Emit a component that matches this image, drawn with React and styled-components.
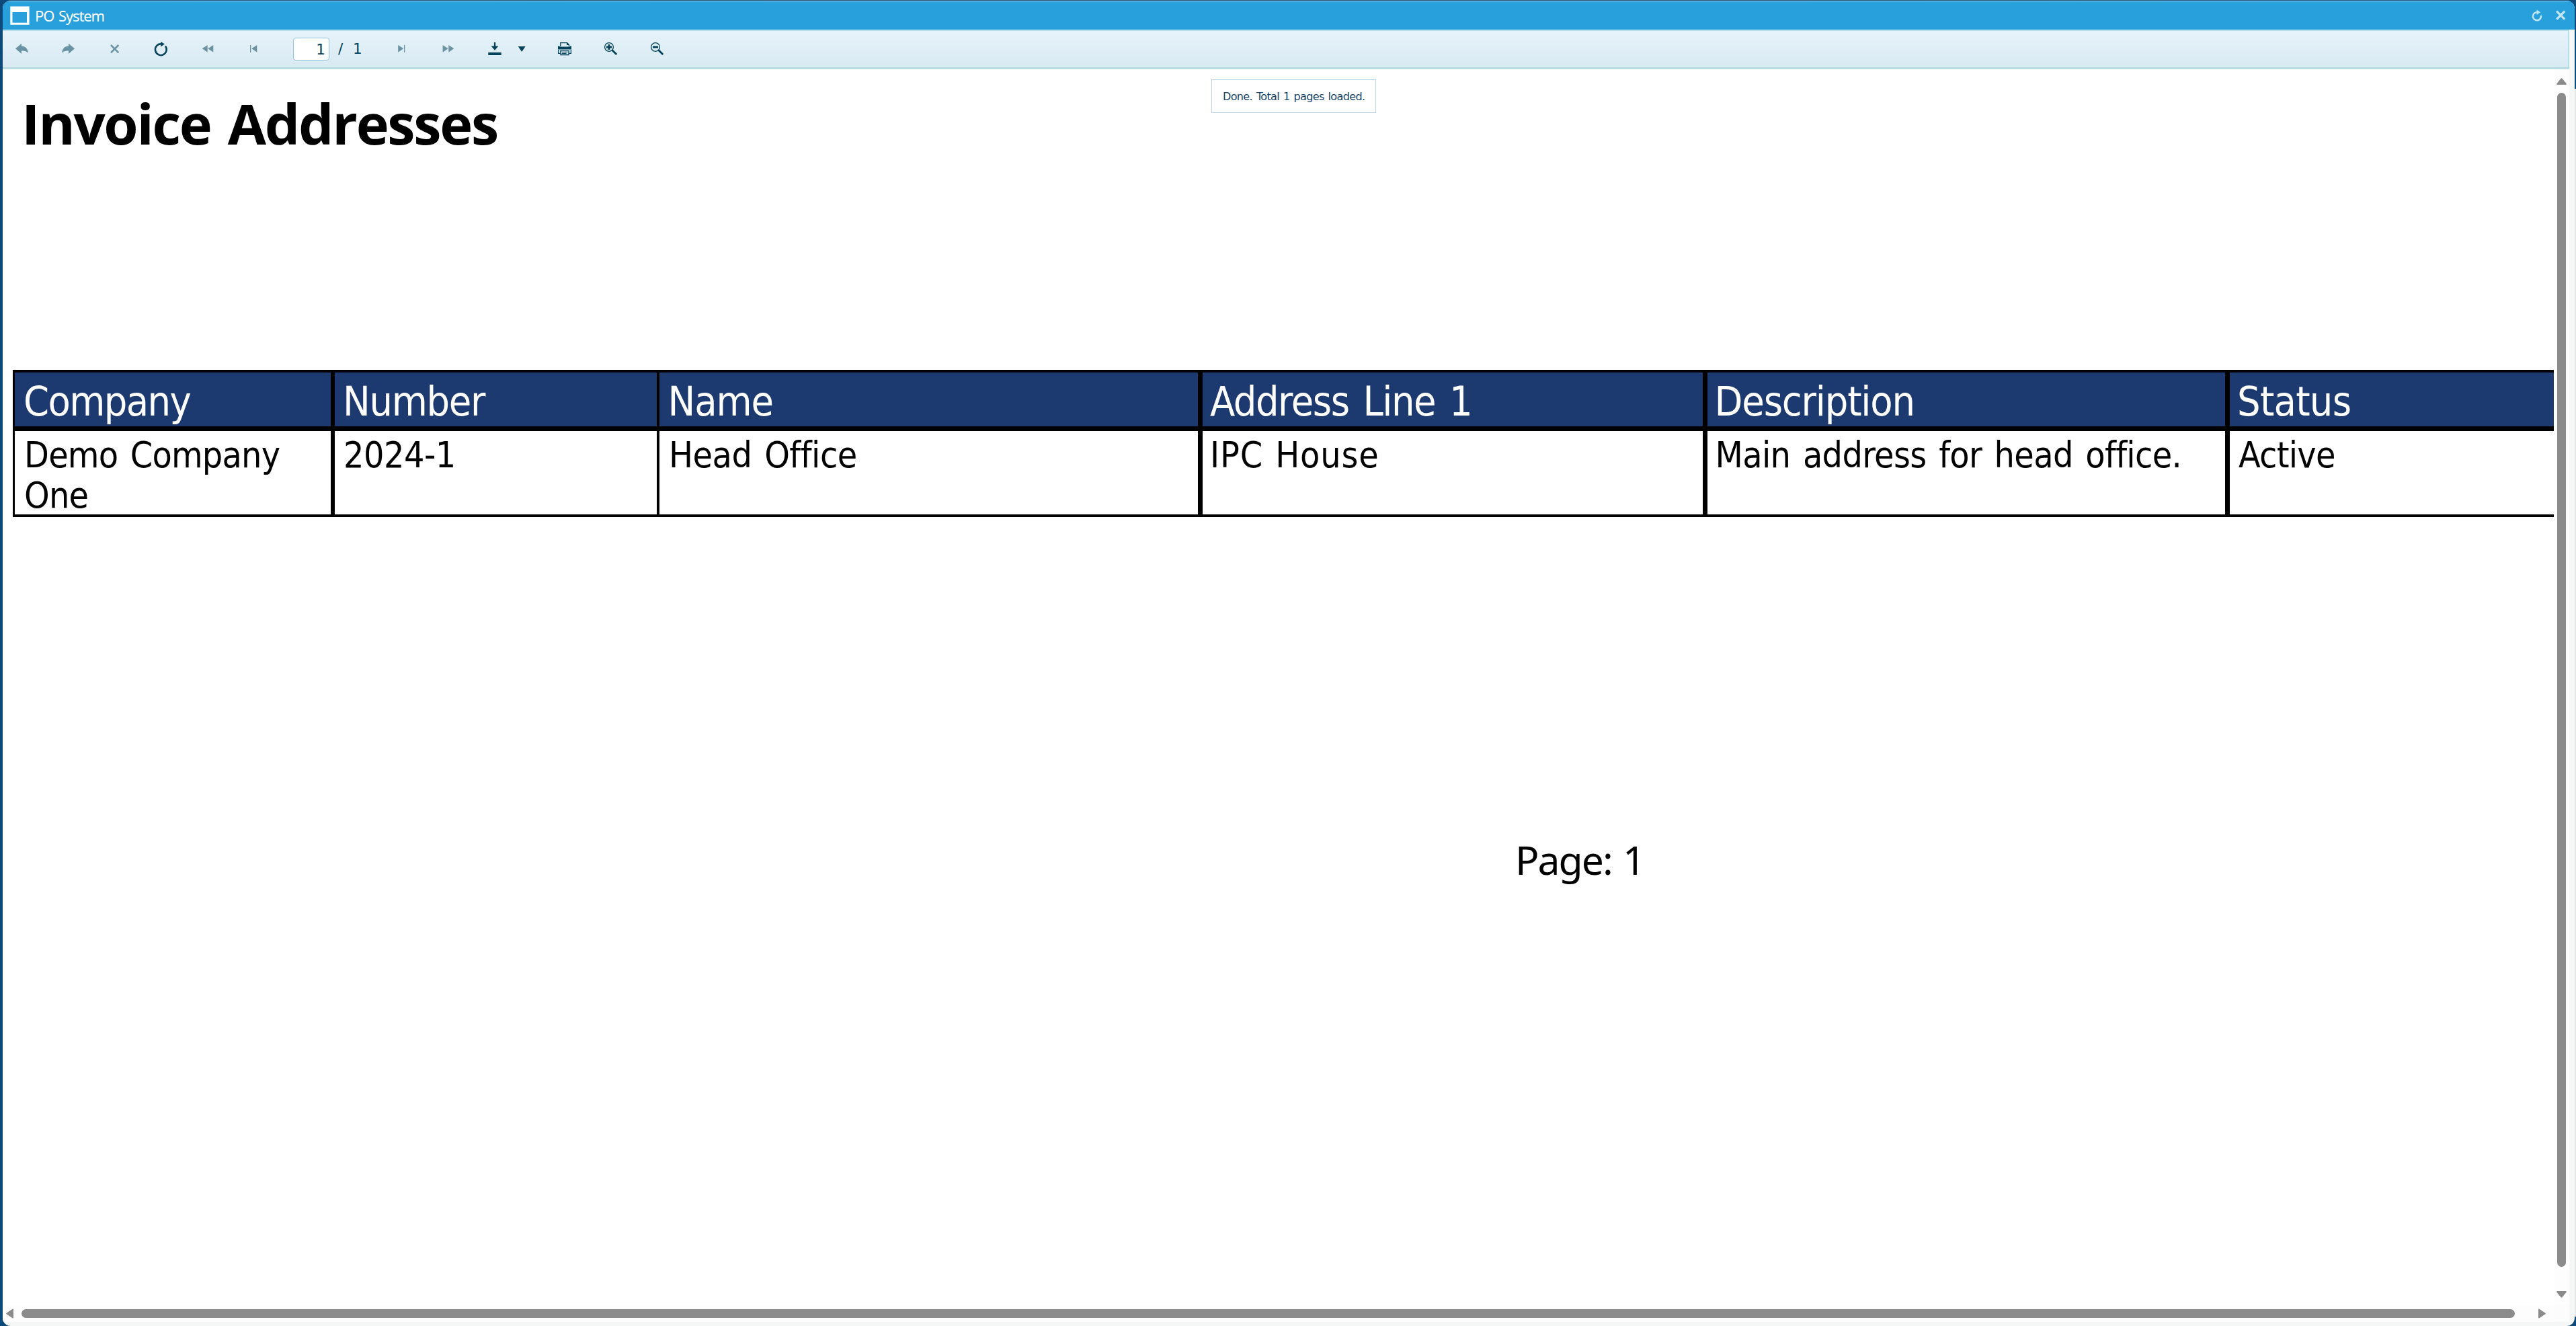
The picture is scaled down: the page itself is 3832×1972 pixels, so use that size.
import React from "react";
import styled, { createGlobalStyle } from "styled-components";

const GlobalStyle = createGlobalStyle`
  * { box-sizing: border-box; }
  html, body { margin: 0; padding: 0; overflow: hidden; }
  body { font-family: "Noto Sans", sans-serif; }
`;

const Desktop = styled.div`
  width: 3832px;
  height: 1972px;
  padding: 1px 2px 0 4px;
  background:
    linear-gradient(#e4e6e8, #e4e6e8) right 132px / 2px 1826px no-repeat,
    linear-gradient(90deg, #0b4a7a, #17456b 30%, #17456b 70%, #0b4a7a);
  background-position: right 0 top 132px, 0 0;
`;

const Window = styled.main`
  display: flex;
  flex-direction: column;
  height: 1971px;
  border-radius: 12px;
  overflow: hidden;
  background: #f5f6f6;
`;

const TitleBar = styled.header`
  display: flex;
  align-items: center;
  flex: none;
  height: 43px;
  padding: 0 13px 0 11px;
  border-top: 1px solid #b5dcf0;
  background: #27a0dc;
  color: #fff;
`;

const WindowTitle = styled.span`
  flex: 1;
  margin-left: 8px;
  font-size: 22px;
  line-height: 42px;
  letter-spacing: -1.1px;
  word-spacing: 2px;
`;

const TitleActions = styled.div`
  display: flex;
  gap: 20px;
  color: #c3e7fa;
`;

const Body = styled.div`
  display: flex;
  flex-direction: column;
  flex: 1;
  width: 3818px;
`;

const Toolbar = styled.nav`
  display: flex;
  align-items: stretch;
  gap: 11px;
  flex: none;
  height: 59px;
  border: solid #b4dee9;
  border-width: 2px 2px 3px 0;
  border-bottom-color: #b9dce1;
  background: linear-gradient(#e7f2fa, #d8eaf2);
  color: #02425a;
`;

const ToolButton = styled.button`
  width: ${(p) => p.$width || 58}px;
  height: 54px;
  padding: 0;
  border: 0;
  background: none;
  color: inherit;
  opacity: ${(p) => (p.$disabled ? 0.53 : 1)};
  svg { display: block; }
`;

const DownloadGroup = styled.div`
  display: flex;
  width: 94px;
`;

const Pager = styled.div`
  display: flex;
  align-items: center;
  width: 121px;
  margin: 0 0 0 18px;
  font: 21.5px "DejaVu Sans", sans-serif;
`;

const PageInput = styled.div`
  width: 54px;
  height: 34px;
  padding-right: 5px;
  border: 1px solid #8fc4de;
  border-radius: 4px;
  background: #fff;
  text-align: right;
  line-height: 34px;
`;

const PageCount = styled.span`
  margin-left: 13px;
  line-height: 34px;
  word-spacing: 8px;
  white-space: nowrap;
`;

const Viewport = styled.section`
  position: relative;
  display: grid;
  grid-template-columns: 3795px 23px;
  grid-template-rows: 1838px 25px;
  background: #fff;
`;

const Sheet = styled.article`
  overflow: hidden;
  color: #000;
`;

const ReportTitle = styled.h1`
  margin: 0;
  padding: 30px 0 0 28px;
  font: 700 83px/100px "Open Sans", "Noto Sans", sans-serif;
  letter-spacing: -2.3px;
  word-spacing: 6px;
`;

const ReportTable = styled.div`
  display: grid;
  grid-template-columns: 476px 483px 808px 751px 777px 500px;
  grid-template-rows: 87px 128px;
  width: 3795px;
  margin: 317px 0 0 15px;
  border: solid #000;
  border-width: 4px 0 0 3px;
  font-family: "DejaVu Sans Condensed", "DejaVu Sans", sans-serif;
`;

const Cell = styled.div`
  padding-left: ${(p) => p.$inset}px;
  border-right: ${(p) => p.$rule}px solid #000;
  letter-spacing: ${(p) => p.$tracking}px;
  word-spacing: ${(p) => p.$space || 4}px;
`;

const HeadCell = styled(Cell)`
  padding-top: 3px;
  border-bottom: 7px solid #000;
  background: #1d3a70;
  color: #fff;
  font-size: 60.6px;
  line-height: 80px;
`;

const DataCell = styled(Cell)`
  padding-top: 6px;
  border-bottom: 4px solid #000;
  font-size: 53.3px;
  line-height: 60px;
`;

const PageNumber = styled.footer`
  margin-top: 474px;
  padding-left: 2250px;
  font: 58.8px/70px "Noto Sans", sans-serif;
  letter-spacing: -2px;
  word-spacing: 3px;
`;

const StatusNotice = styled.div`
  position: absolute;
  top: 15px;
  left: 1798px;
  width: 245px;
  height: 50px;
  padding-left: 16px;
  border: 1px solid #bbd5e8;
  background: #fff;
  color: #154466;
  font: 16px/50px "DejaVu Sans", sans-serif;
  letter-spacing: -0.64px;
  word-spacing: 1.5px;
  white-space: nowrap;
`;

const ScrollBar = styled.div`
  display: flex;
  align-items: center;
  color: #8b8b8b;
  background: #fdfdfd;
  flex-direction: ${(p) => (p.$vertical ? "column" : "row")};
  padding: ${(p) => (p.$vertical ? "13px 0 11px" : "0 12px 0 5px")};
`;

const Thumb = styled.div`
  flex: 1;
  border-radius: 7px;
  background: #8b8b8b;
  ${(p) => (p.$vertical ? "width: 13px; margin: 12px 0 36px;" : "height: 13px; margin: 0 35px 0 12px;")}
`;

const Corner = styled.div`
  background: #fcfcfc;
`;

const columns = [
  { name: "Company", head: [13, -1.6], value: "Demo Company One", data: [14, -0.8], rule: 6 },
  { name: "Number", head: [12, -1.3], value: "2024-1", data: [13, -0.52], rule: 4 },
  { name: "Name", head: [12.5, -1.09], value: "Head Office", data: [14, -0.5], rule: 7 },
  { name: "Address Line 1", head: [11, -1.47, 5], value: "IPC House", data: [11, 0.85, 2], rule: 7 },
  { name: "Description", head: [10.5, -1.2], value: "Main address for head office.", data: [11.5, -0.66], rule: 7 },
  { name: "Status", head: [11, -0.72], value: "Active", data: [13, -0.74], rule: 0 },
];

const Icon = ({ width = 58, children }) => (
  <svg width={width} height="54" viewBox={`0 0 ${width} 54`} fill="currentColor">{children}</svg>
);

const curvedArrow = "M19 26.3 L28 18.7 V22.6 C33.5 22.8 37 26 38 32.7 C35 29.6 32 29.3 28 29.5 V34Z";

const UndoIcon = () => <Icon><path d={curvedArrow} /></Icon>;
const RedoIcon = () => <Icon><path transform="translate(57 0) scale(-1 1)" d={curvedArrow} /></Icon>;
const StopIcon = () => (
  <Icon><path d="M23 21 L34.3 32.3 M34.3 21 L23 32.3" fill="none" stroke="currentColor" strokeWidth="2.6" /></Icon>
);
const RefreshIcon = () => (
  <Icon>
    <path d="M28.6 19.3 A8.4 8.4 0 1 0 35 22.6" fill="none" stroke="currentColor" strokeWidth="2.5" />
    <path d="M28.2 16 L34 19.6 L28.2 23.4Z" />
  </Icon>
);
const FirstFastIcon = () => <Icon><path d="M28.7 21 V31.7 L20.7 26.3Z M37.3 21 V31.7 L29.3 26.3Z" /></Icon>;
const PreviousIcon = () => <Icon><path d="M33.3 21 V31.7 L25.3 26.3Z M23 21 H24.3 V32 H23Z" /></Icon>;
const NextIcon = () => <Icon><path d="M24.2 21 V31.7 L32.2 26.3Z M33 21 H34.3 V32 H33Z" /></Icon>;
const LastFastIcon = () => <Icon><path d="M21.6 21 V31.7 L29.6 26.3Z M30.3 21 V31.7 L38.3 26.3Z" /></Icon>;
const DownloadIcon = () => (
  <Icon><path d="M28.9 17 H31.2 V22.6 H35.4 L30 28.8 L24.6 22.6 H28.9Z M20.3 32 H39.7 V36 H20.3Z" /></Icon>
);
const CaretIcon = () => <Icon width={24}><path d="M6.7 23 H17.7 L12.2 31Z" /></Icon>;
const PrintIcon = () => (
  <Icon>
    <path d="M22.8 23 V17.6 H32.6 L35.4 20.4 V23" fill="none" stroke="currentColor" strokeWidth="1.3" />
    <path d="M32 17 L36 21 H32Z M19 22.6 H21.5 V23.6 H36.5 V22.6 H39 V27.4 H19Z" />
    <path d="M23 33.4 H19.7 V28 M38.4 28 V33.4 H35 M23 29.5 V35.5 H35 V29.5 M22 29.6 H36" fill="none" stroke="currentColor" strokeWidth="1.3" />
    <path d="M24.8 31 H33.2 V32 H24.8Z M24.8 33 H31.5 V34 H24.8Z" />
  </Icon>
);
const ZoomIcon = ({ plus }) => (
  <Icon>
    <circle cx="26" cy="24" r="6.4" fill="none" stroke="currentColor" strokeWidth="1.3" />
    <path d={plus ? "M22 24 H30 M26 20 V28" : "M22 24 H30"} fill="none" stroke="currentColor" strokeWidth="2.8" />
    <path d="M30.6 28.6 L37.2 35" fill="none" stroke="currentColor" strokeWidth="2.8" />
  </Icon>
);

const WindowIcon = () => (
  <svg width="29" height="28" viewBox="0 0 29 28">
    <path fill="#fff" fillRule="evenodd" d="M.3 .5H28.6V27.8H.3Z M3.5 9V24.8H25V9Z" />
  </svg>
);
const ReloadIcon = () => (
  <svg width="16" height="18" viewBox="0 0 16 18">
    <path d="M8.4 4.3 A6 6 0 1 0 13.8 9" fill="none" stroke="currentColor" strokeWidth="2.6" />
    <path d="M7.6 0.6 L13.2 4.2 L7.6 8Z" fill="currentColor" />
  </svg>
);
const CloseIcon = () => (
  <svg width="15" height="18" viewBox="0 0 15 18">
    <path d="M1.2 2.7 L13.2 14.7 M13.2 2.7 L1.2 14.7" stroke="currentColor" strokeWidth="3.3" />
  </svg>
);
const ScrollArrow = ({ vertical, turned }) => {
  const size = vertical ? [15, 10] : [11, 15];
  const shape = vertical ? "M7.5 1.2 L13.8 9 H1.2Z" : "M1.2 7.5 L10 1.5 V13.5Z";
  return (
    <svg width={size[0]} height={size[1]} viewBox={`0 0 ${size[0]} ${size[1]}`}>
      <path
        transform={turned ? `rotate(180 ${size[0] / 2} ${size[1] / 2})` : undefined}
        d={shape} fill="currentColor" stroke="currentColor" strokeWidth="2" strokeLinejoin="round"
      />
    </svg>
  );
};

export default function App() {
  return (
    <Desktop>
      <GlobalStyle />
      <Window>
        <TitleBar>
          <WindowIcon />
          <WindowTitle>PO System</WindowTitle>
          <TitleActions><ReloadIcon /><CloseIcon /></TitleActions>
        </TitleBar>
        <Body>
          <Toolbar>
            <ToolButton $disabled><UndoIcon /></ToolButton>
            <ToolButton $disabled><RedoIcon /></ToolButton>
            <ToolButton $disabled><StopIcon /></ToolButton>
            <ToolButton><RefreshIcon /></ToolButton>
            <ToolButton $disabled><FirstFastIcon /></ToolButton>
            <ToolButton $disabled><PreviousIcon /></ToolButton>
            <Pager>
              <PageInput>1</PageInput>
              <PageCount>/ 1</PageCount>
            </Pager>
            <ToolButton $disabled><NextIcon /></ToolButton>
            <ToolButton $disabled><LastFastIcon /></ToolButton>
            <DownloadGroup>
              <ToolButton><DownloadIcon /></ToolButton>
              <ToolButton $width={24}><CaretIcon /></ToolButton>
            </DownloadGroup>
            <ToolButton><PrintIcon /></ToolButton>
            <ToolButton><ZoomIcon plus /></ToolButton>
            <ToolButton><ZoomIcon /></ToolButton>
          </Toolbar>
          <Viewport>
            <Sheet>
              <ReportTitle>Invoice Addresses</ReportTitle>
              <ReportTable>
                {columns.map(({ name, head, rule }) => (
                  <HeadCell key={name} $inset={head[0]} $tracking={head[1]} $space={head[2]} $rule={rule}>{name}</HeadCell>
                ))}
                {columns.map(({ name, value, data, rule }) => (
                  <DataCell key={name} $inset={data[0]} $tracking={data[1]} $space={data[2]} $rule={rule}>{value}</DataCell>
                ))}
              </ReportTable>
              <PageNumber>Page: 1</PageNumber>
            </Sheet>
            <ScrollBar $vertical>
              <ScrollArrow vertical />
              <Thumb $vertical />
              <ScrollArrow vertical turned />
            </ScrollBar>
            <ScrollBar>
              <ScrollArrow />
              <Thumb />
              <ScrollArrow turned />
            </ScrollBar>
            <Corner />
            <StatusNotice>Done. Total 1 pages loaded.</StatusNotice>
          </Viewport>
        </Body>
      </Window>
    </Desktop>
  );
}
